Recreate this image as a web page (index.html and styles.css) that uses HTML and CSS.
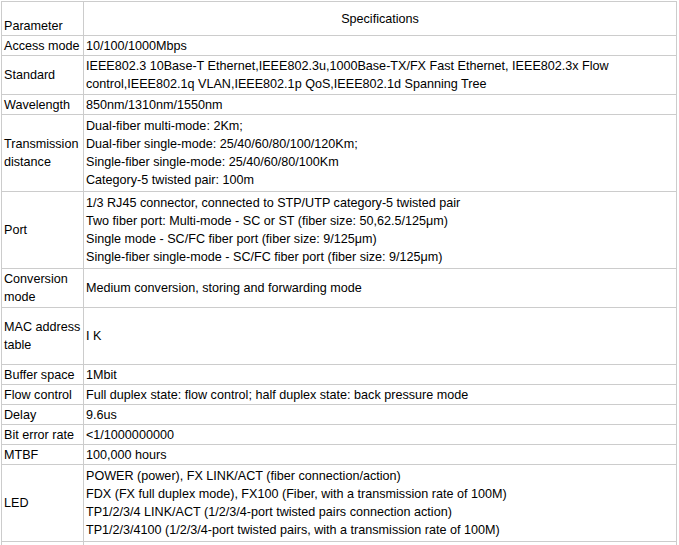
FILE: index.html
```html
<!DOCTYPE html>
<html>
<head>
<meta charset="utf-8">
<title>Specifications</title>
<link rel="stylesheet" href="styles.css">
</head>
<body>
<table class="spec">
  <colgroup><col class="c-param"><col class="c-value"></colgroup>
  <tr class="head">
    <td class="param bottom">Parameter</td>
    <td class="center">Specifications</td>
  </tr>
  <tr><td>Access mode</td><td>10/100/1000Mbps</td></tr>
  <tr class="two"><td>Standard</td><td>IEEE802.3 10Base-T Ethernet,IEEE802.3u,1000Base-TX/FX Fast Ethernet, IEEE802.3x Flow control,IEEE802.1q VLAN,IEEE802.1p QoS,IEEE802.1d Spanning Tree</td></tr>
  <tr><td>Wavelength</td><td>850nm/1310nm/1550nm</td></tr>
  <tr class="four"><td>Transmission distance</td><td>Dual-fiber multi-mode: 2Km;<br>Dual-fiber single-mode: 25/40/60/80/100/120Km;<br>Single-fiber single-mode: 25/40/60/80/100Km<br>Category-5 twisted pair: 100m</td></tr>
  <tr class="four"><td>Port</td><td>1/3 RJ45 connector, connected to STP/UTP category-5 twisted pair<br>Two fiber port: Multi-mode - SC or ST (fiber size: 50,62.5/125μm)<br>Single mode - SC/FC fiber port (fiber size: 9/125μm)<br>Single-fiber single-mode - SC/FC fiber port (fiber size: 9/125μm)</td></tr>
  <tr class="two"><td>Conversion mode</td><td>Medium conversion, storing and forwarding mode</td></tr>
  <tr class="tall"><td>MAC address table</td><td>I K</td></tr>
  <tr><td>Buffer space</td><td>1Mbit</td></tr>
  <tr><td>Flow control</td><td>Full duplex state: flow control; half duplex state: back pressure mode</td></tr>
  <tr><td>Delay</td><td>9.6us</td></tr>
  <tr><td>Bit error rate</td><td>&lt;1/1000000000</td></tr>
  <tr><td>MTBF</td><td>100,000 hours</td></tr>
  <tr class="four"><td>LED</td><td>POWER (power), FX LINK/ACT (fiber connection/action)<br>FDX (FX full duplex mode), FX100 (Fiber, with a transmission rate of 100M)<br>TP1/2/3/4 LINK/ACT (1/2/3/4-port twisted pairs connection action)<br>TP1/2/3/4100 (1/2/3/4-port twisted pairs, with a transmission rate of 100M)</td></tr>
  <tr class="rest"><td></td><td></td></tr>
</table>
</body>
</html>
```
FILE: styles.css
```css
html, body {
  margin: 0;
  padding: 0;
  background: #ffffff;
}

body {
  padding: 1px 0 0 1px;
  font-family: "Liberation Sans", Arial, sans-serif;
  font-size: 12.6px;
  color: #000000;
}

.spec {
  border-collapse: collapse;
  table-layout: fixed;
  width: 676px;
}

.c-param {
  width: 82px;
}

.spec td {
  border: 1px solid #cccccc;
  padding: 1px 2px 0 2px;
  line-height: 18px;
  vertical-align: middle;
  text-align: left;
}

.spec tr.head td {
  height: 33px;
  padding: 0 2px;
}

.spec td.bottom {
  vertical-align: bottom;
  padding-bottom: 1px;
}

.spec td.center {
  text-align: center;
}

.spec tr.two td {
  padding-top: 1px;
  padding-bottom: 1px;
}

.spec tr.four td {
  padding-top: 2px;
  padding-bottom: 2px;
}

.spec tr.tall td {
  height: 56px;
  padding: 0 2px;
}

.spec tr.rest td {
  height: 30px;
}
```
